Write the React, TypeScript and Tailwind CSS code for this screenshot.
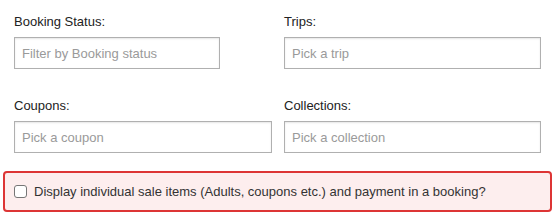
import React from "react";

function Field({ label, placeholder, inputClass = "w-full" }: any) {
  return (
    <div className="flex flex-col">
      <label className="h-4 leading-4 text-[13px] text-[#222] mb-[7px]">{label}</label>
      <input
        type="text"
        placeholder={placeholder}
        className={`${inputClass} h-[32px] border border-[#b0b0b0] bg-white px-[7px] text-[13px] text-[#333] placeholder:text-[#9a9a9a] shadow-[inset_0_1px_2px_rgba(0,0,0,0.1)] outline-none`}
      />
    </div>
  );
}

export default function App() {
  return (
    <div
      className="w-[556px] h-[221px] bg-white pt-[14px]"
      style={{ fontFamily: '"Liberation Sans", Arial, sans-serif' }}
    >
      {/* FILTER FIELDS */}

      <div className="grid grid-cols-[258px_257px] gap-x-3 gap-y-[29px] pl-[14px]">
        <Field label="Booking Status:" placeholder="Filter by Booking status" inputClass="w-[206px]" />

        <Field label="Trips:" placeholder="Pick a trip" />

        <Field label="Coupons:" placeholder="Pick a coupon" />

        <Field label="Collections:" placeholder="Pick a collection" />
      </div>

      {/* SALE ITEMS TOGGLE */}

      <div className="mt-[18px] ml-[3px] w-[549px] h-[41px] border-2 border-[#dd3535] rounded-[4px] bg-[#fdeeee] flex items-center pl-[9px]">
        <label className="flex items-center gap-[7px] text-[13px] text-[#333]">
          <span className="w-[13px] h-[13px] border border-[#767676] rounded-[3px] bg-white" />
          Display individual sale items (Adults, coupons etc.) and payment in a booking?
        </label>
      </div>
    </div>
  );
}
